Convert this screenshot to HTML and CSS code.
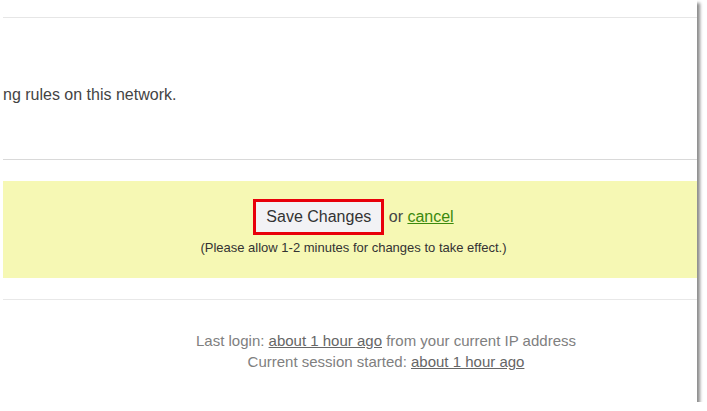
FILE: index.html
```html
<!DOCTYPE html>
<html>
<head>
    <title>Settings</title>
    <link rel="stylesheet" href="styles.css">
</head>
<body>
    <div class="frame">
        <div class="top-gap"></div>
        <div class="rules">
            <p class="rules-text">ng rules on this network.</p>
        </div>
        <div class="save-area">
            <div class="save-box">
                <div class="save-row">
                    <button class="save-button" type="button">Save Changes</button>
                    or <a class="cancel" href="#">cancel</a>
                </div>
                <p class="save-note">(Please allow 1-2 minutes for changes to take effect.)</p>
            </div>
        </div>
        <div class="footer">
            <p>Last login: <a href="#">about 1 hour ago</a> from your current IP address</p>
            <p>Current session started: <a href="#">about 1 hour ago</a></p>
        </div>
    </div>
</body>
</html>
```

FILE: styles.css
```css
body {
    margin: 0;
    padding: 0;
    background-color: #fff;
    font-family: "Liberation Sans", Arial, sans-serif;
}

.frame {
    width: 697px;
    height: 402px;
    background-color: #fff;
    box-shadow: 3px 3px 3px rgba(0, 0, 0, 0.45);
    overflow: hidden;
}

.top-gap {
    height: 17px;
}

.rules {
    margin-left: 3px;
    height: 142px;
    border-top: 1px solid #e6e6e6;
    box-sizing: border-box;
    padding-top: 67px;
}

.rules-text {
    margin: 0;
    font-size: 16px;
    line-height: 19px;
    color: #444;
}

.save-area {
    margin-left: 3px;
    border-top: 1px solid #d9d9d9;
    padding-top: 21px;
}

.save-box {
    height: 97px;
    box-sizing: border-box;
    padding: 18px 0 0 7px;
    background-color: #f6f8b4;
    text-align: center;
}

.save-row {
    font-size: 16px;
    line-height: 36px;
    height: 36px;
    color: #444;
}

.save-button {
    height: 36px;
    padding: 0 10px;
    border: 3px solid #e8000b;
    background-color: #f2f2f5;
    color: #333;
    font-family: "Liberation Sans", Arial, sans-serif;
    font-size: 16px;
    vertical-align: top;
    cursor: pointer;
}

.cancel {
    color: #3b8a0e;
}

.save-note {
    margin: 5px 0 0;
    font-size: 13px;
    line-height: 16px;
    color: #333;
}

.footer {
    margin: 21px 0 0 3px;
    border-top: 1px solid #e8e8e8;
    padding: 30px 0 0 72px;
    text-align: center;
    color: #808080;
    font-size: 15px;
    line-height: 21px;
}

.footer p {
    margin: 0;
}

.footer a {
    color: #666;
}
```
